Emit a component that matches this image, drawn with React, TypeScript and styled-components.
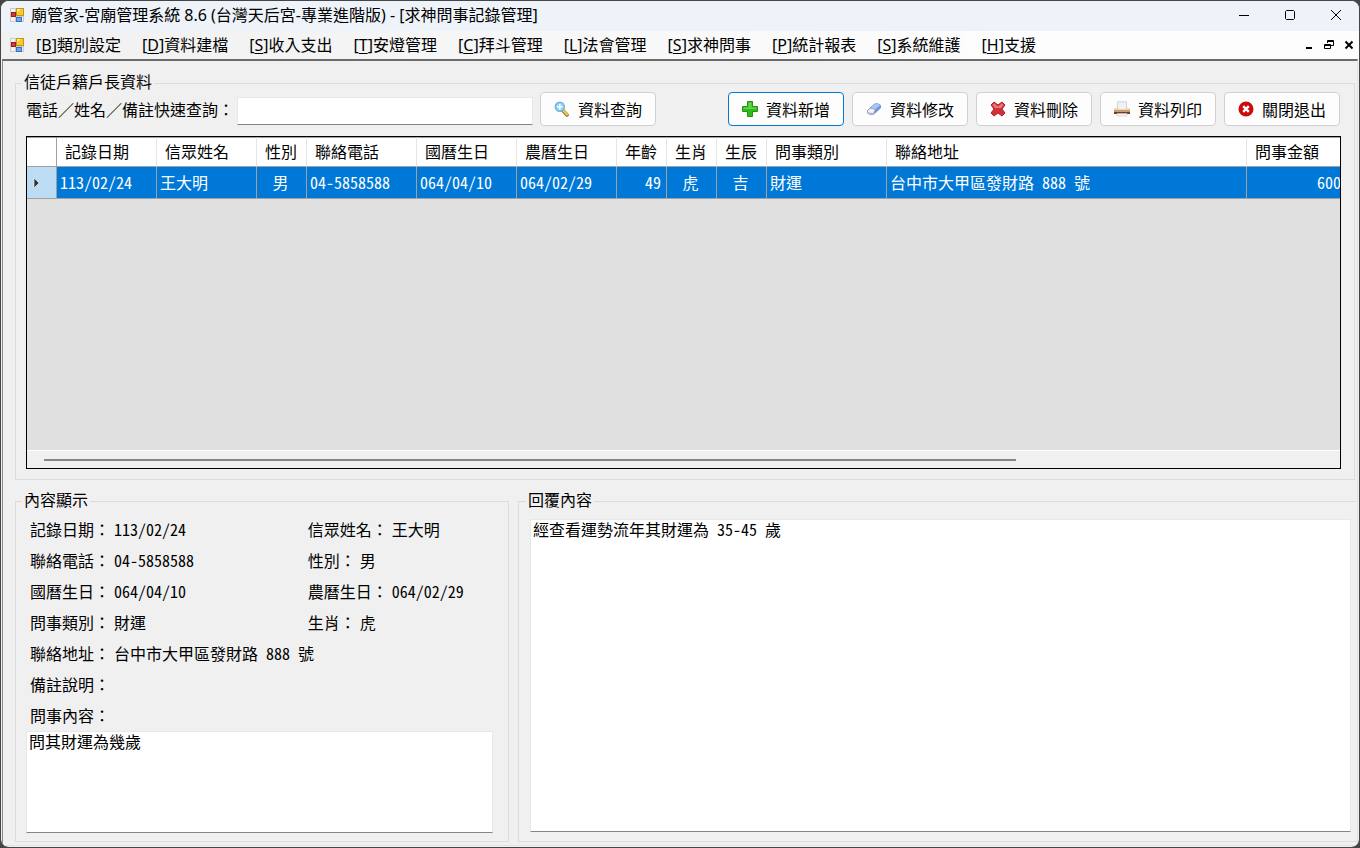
import React from "react";
import styled, { createGlobalStyle, css } from "styled-components";

const cjkMono = `"Noto Sans Mono CJK TC", "Noto Sans CJK TC", monospace`;
const uiFont = `"Noto Sans", "Noto Sans CJK TC", sans-serif`;

const GlobalStyle = createGlobalStyle`
  *, *::before, *::after { box-sizing: border-box; }
  body { margin: 0; background: #454547; color: #000; font: 16px/18px ${cjkMono}; }
  button, input, textarea { font: inherit; color: inherit; margin: 0; }
`;

const Window = styled.div`
  display: flex;
  flex-direction: column;
  min-height: 100vh;
  border: 1px solid #454547;
  border-radius: 9px;
  background: #f0f0f0;
  overflow: hidden;
`;

const TitleBar = styled.header`
  display: flex;
  align-items: center;
  height: 30px;
  padding: 0 0 2px 8px;
  background: #eef2f9;
  font-family: ${uiFont};
`;

const Title = styled.h1`
  flex: 1;
  margin: 0 0 0 6px;
  font-size: 16px;
  font-weight: 400;
  line-height: 28px;
  white-space: nowrap;
`;

const WindowButton = styled.button<{ $compact?: boolean }>`
  display: flex;
  align-items: center;
  justify-content: center;
  width: ${(p) => (p.$compact ? 20 : 46)}px;
  height: 28px;
  padding: 0;
  border: 0;
  background: none;
`;

const MenuBar = styled.nav`
  display: flex;
  align-items: center;
  height: 28px;
  padding-left: 8px;
  background: linear-gradient(90deg, #f0f0f0, #fdfdfd 75%);
  font-family: ${uiFont};
`;

const MenuItems = styled.div`
  display: flex;
  flex: 1;
  gap: 21px;
  margin-left: 11px;
`;

const MenuItem = styled.button`
  height: 28px;
  padding: 0;
  border: 0;
  background: none;
  line-height: 26px;
  white-space: nowrap;

  u {
    text-underline-offset: 2px;
    text-decoration-thickness: 1px;
  }
`;

const Workspace = styled.main`
  display: flex;
  flex: 1;
  flex-direction: column;
  gap: 12px;
  margin: 0 1px 1px;
  padding: 13px 0 3px 12px;
  border: 1px solid #e3e3e3;
  border-top: 2px solid #6b6b6b;
  border-left-color: #8a8a8a;
`;

const Group = styled.fieldset<{ $open?: boolean }>`
  display: flex;
  flex-direction: column;
  min-width: 0;
  margin: 0;
  border: 1px solid #dcdcdc;
  ${(p) => p.$open && css`border-right: 0;`}
`;

const Legend = styled.legend`
  height: 18px;
  margin-left: -4px;
  padding: 0 2px;
  line-height: 14px;
`;

const HouseholdGroup = styled(Group)`
  flex: 1 1 406px;
  margin-right: 2px;
  padding: 0 13px 10px 10px;
`;

const LowerArea = styled.div`
  display: flex;
  flex: 1 1 350px;
  gap: 9px;
`;

const DetailGroup = styled(Group)`
  flex: 1 1 494px;
  padding: 4px 15px 8px 10px;
`;

const ReplyGroup = styled(Group)`
  flex: 1 1 839px;
  padding: 9px 6px 9px 11px;
`;

const Toolbar = styled.div`
  display: flex;
  align-items: center;
  height: 34px;
  margin-bottom: 10px;
`;

const SearchLabel = styled.label`
  padding: 0 3px 0 0;
  white-space: nowrap;
`;

const fieldBox = css`
  border: 1px solid #e8e8e8;
  border-bottom-color: #868686;
  border-radius: 0;
  background: #fff;
  outline: 0;
`;

const SearchInput = styled.input`
  ${fieldBox}
  width: 296px;
  height: 28px;
  margin: 4px 7px 0 0;
  padding: 0 3px;
`;

const Actions = styled.div`
  display: flex;
  gap: 8px;
  margin: 0 1px 0 auto;
`;

const ToolButton = styled.button<{ $active?: boolean }>`
  display: flex;
  flex: none;
  align-items: center;
  gap: 8px;
  width: 116px;
  height: 34px;
  padding: 0 0 1px 13px;
  border: 1px solid ${(p) => (p.$active ? "#0078d4" : "#d0d0d0")};
  border-radius: 4px;
  background: #fdfdfd;
  white-space: nowrap;
`;

const GridFrame = styled.div`
  display: flex;
  flex: 1;
  flex-direction: column;
  border: 1px solid #000;
  background: #e0e0e0;
  overflow: hidden;
`;

const GridBody = styled.div`
  flex: 1;
  overflow: hidden;
`;

const DataTable = styled.table`
  width: 1320px;
  border-collapse: separate;
  border-spacing: 0;
  table-layout: fixed;
`;

const HeadCell = styled.th<{ $width: number; $strong?: boolean }>`
  width: ${(p) => p.$width}px;
  height: 30px;
  padding: 0 0 2px 8px;
  border: solid #a0a0a0;
  border-width: 1px 1px 1px 0;
  border-right-color: ${(p) => (p.$strong ? "#a0a0a0" : "#e5e5e5")};
  background: #fff;
  font-weight: 400;
  text-align: left;
  white-space: nowrap;
`;

const Cell = styled.td<{ $align: string }>`
  height: 32px;
  padding: 0 5px 2px 3px;
  border: solid #a0a0a0;
  border-width: 0 1px 1px 0;
  background: #0078d7;
  color: #fff;
  text-align: ${(p) => p.$align};
  white-space: nowrap;
`;

const RowMarker = styled.th`
  padding: 0 0 0 6px;
  border: solid #a0a0a0;
  border-width: 0 1px 1px 0;
  background: #bcdcf4;
  text-align: left;

  svg { display: block; }
`;

const ScrollTrack = styled.div`
  height: 18px;
  padding: 8px 0 0 17px;
  border-top: 1px solid #fff;
  background: #f0f0f0;
`;

const ScrollThumb = styled.div`
  width: 75%;
  height: 2px;
  background: #868686;
`;

const Details = styled.dl`
  display: grid;
  grid-template-columns: 3fr 2fr;
  margin: 0;
  padding-left: 4px;
`;

const Detail = styled.div<{ $wide?: boolean }>`
  display: flex;
  gap: 4px;
  grid-column: ${(p) => (p.$wide ? "1 / -1" : "auto")};
  line-height: 31px;
  white-space: nowrap;

  dd { margin: 0; }
`;

const QuestionLabel = styled.label`
  padding-left: 4px;
  line-height: 31px;
`;

const TextBox = styled.textarea`
  ${fieldBox}
  display: block;
  flex: 1;
  width: 100%;
  min-height: 60px;
  padding: 0 2px;
  resize: none;
`;

const AppIcon = () => (
  <svg width="16" height="16" viewBox="0 0 16 16">
    <rect x="1.500" y="1.500" width="13" height="13" fill="#f2f2f2" stroke="#cbcbcb" />
    <path d="M6.500 1.500v13M1.500 9.500h13" stroke="#cbcbcb" />
    <rect x="7.500" y="1.500" width="7" height="7" fill="#fbc926" stroke="#c4951c" />
    <path d="M8 5V2h4z" fill="#fff0a0" />
    <rect x="2.500" y="5.500" width="4" height="4" fill="#d23b2f" stroke="#9a1d17" />
    <rect x="7.500" y="10.500" width="5" height="4" fill="#6ea8f4" stroke="#3a70c4" />
  </svg>
);

const MagnifierIcon = () => (
  <svg width="16" height="16" viewBox="0 0 16 16">
    <path d="M9 9.500l4 4.500" stroke="#8d7a44" strokeWidth="3.600" strokeLinecap="round" />
    <path d="M9.500 9.500l3.500 4" stroke="#f5c945" strokeWidth="2.200" strokeLinecap="round" />
    <circle cx="5.800" cy="5.800" r="4.600" fill="#8fd2f8" stroke="#6aaede" strokeWidth="1.200" />
    <path d="M5.800 3v5.600M3 5.800h5.600" stroke="#fff" strokeWidth="1.600" />
  </svg>
);

const PlusIcon = () => (
  <svg width="16" height="16" viewBox="0 0 16 16">
    <path d="M5.500.500h5v5h5v5h-5v5h-5v-5h-5v-5h5z" fill="#30b91f" stroke="#1f9412" strokeLinejoin="round" />
    <path d="M6.500 1.500h3v5h5v1.500h-13V6.500h5z" fill="#62d64a" />
  </svg>
);

const EraserIcon = () => (
  <svg width="16" height="16" viewBox="0 0 16 16">
    <path d="M1.500 9.500L8 3.500q1-1 2.500-.800l2.500.500q1.500.400 1.500 2V7L8.500 12.500q-1 1-2.500.900L3 12.900q-1.500-.400-1.500-1.900z" fill="#7196dc" stroke="#6d7fa8" strokeWidth=".8" />
    <path d="M4.500 7L8 3.500q1-1 2.500-.800l2.500.500q1 .300 1.200 1L9 8.500z" fill="#a9c4f5" />
    <path d="M1.700 9.500l2.500-2.300 4.800 1-1 4.600q-1 .600-2 .500L3 12.800q-1.500-.400-1.400-1.800z" fill="#f4f5fa" stroke="#8a91a8" strokeWidth=".6" />
    <path d="M2 11l4.500 1L8.500 9.500l-.500 3.300q-1 .600-2 .500L3 12.800z" fill="#b9bfd0" />
  </svg>
);

const DeleteIcon = () => (
  <svg width="16" height="16" viewBox="0 0 16 16">
    <path d="M4 1l4 3L12 1l3 3-3 4 3 4-3 3-4-3L4 15l-3-3 3-4L1 4z" fill="#cf3338" stroke="#b3202a" strokeLinejoin="round" />
    <path d="M4 2.200l4 3.200 4-3.200L13.500 4 11 7H5L2.500 4z" fill="#e8787a" />
  </svg>
);

const PrinterIcon = () => (
  <svg width="16" height="16" viewBox="0 0 16 16">
    <path d="M3.500.800h9v8h-9z" fill="#f0f1f5" stroke="#c9cad1" strokeWidth=".8" />
    <path d="M1.500 7h2v1h9V7h2L16 9v4H0V9z" fill="#c99a6c" />
    <path d="M1.500 7h2v1h9V7h2L16 9H0z" fill="#ecd6b8" />
    <path d="M0 11h16v2H0z" fill="#6d4022" />
    <path d="M3 12.500h10V15H3z" fill="#f4f4f7" stroke="#c9cad1" strokeWidth=".6" />
  </svg>
);

const ExitIcon = () => (
  <svg width="16" height="16" viewBox="0 0 16 16">
    <circle cx="8" cy="8" r="7.500" fill="#cc0a0a" />
    <path d="M5.200 5.200l5.600 5.600M10.800 5.200l-5.600 5.600" stroke="#fff" strokeWidth="2.400" />
  </svg>
);

const Glyph = ({ d, bold }: { d: string; bold?: boolean }) => (
  <svg width="12" height="12" viewBox="0 0 12 12" fill="none" stroke="#000" strokeWidth={bold ? 2 : 1}>
    <path d={d} />
  </svg>
);

const RestoreIcon = () => (
  <svg width="12" height="12" viewBox="0 0 12 12" fill="none" stroke="#000">
    <path d="M4.500 4V1.500h6v5H8M4 2.500h7M1.500 5.500h6v4h-6zM1 6.500h7" />
  </svg>
);

const menus = [
  ["B", "類別設定"],
  ["D", "資料建檔"],
  ["S", "收入支出"],
  ["T", "安燈管理"],
  ["C", "拜斗管理"],
  ["L", "法會管理"],
  ["S", "求神問事"],
  ["P", "統計報表"],
  ["S", "系統維護"],
  ["H", "支援"],
];

const columns = [
  { title: "記錄日期", width: 100, value: "113/02/24", align: "left" },
  { title: "信眾姓名", width: 100, value: "王大明", align: "left" },
  { title: "性別", width: 50, value: "男", align: "center" },
  { title: "聯絡電話", width: 110, value: "04-5858588", align: "left" },
  { title: "國曆生日", width: 100, value: "064/04/10", align: "left" },
  { title: "農曆生日", width: 100, value: "064/02/29", align: "left" },
  { title: "年齡", width: 50, value: "49", align: "right" },
  { title: "生肖", width: 50, value: "虎", align: "center" },
  { title: "生辰", width: 50, value: "吉", align: "center" },
  { title: "問事類別", width: 120, value: "財運", align: "left" },
  { title: "聯絡地址", width: 360, value: "台中市大甲區發財路 888 號", align: "left" },
  { title: "問事金額", width: 100, value: "600", align: "right" },
];

const details = [
  { label: "記錄日期", value: "113/02/24" },
  { label: "信眾姓名", value: "王大明" },
  { label: "聯絡電話", value: "04-5858588" },
  { label: "性別", value: "男" },
  { label: "國曆生日", value: "064/04/10" },
  { label: "農曆生日", value: "064/02/29" },
  { label: "問事類別", value: "財運" },
  { label: "生肖", value: "虎" },
  { label: "聯絡地址", value: "台中市大甲區發財路 888 號", wide: true },
  { label: "備註說明", value: "", wide: true },
];

export default function App() {
  return (
    <Window lang="zh-TW">
      <GlobalStyle />
      <TitleBar>
        <AppIcon />
        <Title>廟管家-宮廟管理系統 8.6 (台灣天后宮-專業進階版) - [求神問事記錄管理]</Title>
        <WindowButton aria-label="最小化"><Glyph d="M1 6.500h10" /></WindowButton>
        <WindowButton aria-label="最大化"><Glyph d="M2.500 1.500h7l1 1v7l-1 1h-7l-1-1v-7z" /></WindowButton>
        <WindowButton aria-label="關閉"><Glyph d="M1 1l10 10M11 1L1 11" /></WindowButton>
      </TitleBar>

      <MenuBar>
        <AppIcon />
        <MenuItems>
          {menus.map(([key, name]) => (
            <MenuItem key={name}>[<u>{key}</u>]{name}</MenuItem>
          ))}
        </MenuItems>
        <WindowButton $compact aria-label="最小化子視窗"><Glyph bold d="M3 9h6" /></WindowButton>
        <WindowButton $compact aria-label="還原子視窗"><RestoreIcon /></WindowButton>
        <WindowButton $compact aria-label="關閉子視窗"><Glyph bold d="M2.500 2.500l7 7M9.500 2.500l-7 7" /></WindowButton>
      </MenuBar>

      <Workspace>
        <HouseholdGroup>
          <Legend>信徒戶籍戶長資料</Legend>
          <Toolbar>
            <SearchLabel htmlFor="quick-search">電話／姓名／備註快速查詢：</SearchLabel>
            <SearchInput id="quick-search" type="text" />
            <ToolButton><MagnifierIcon />資料查詢</ToolButton>
            <Actions>
              <ToolButton $active><PlusIcon />資料新增</ToolButton>
              <ToolButton><EraserIcon />資料修改</ToolButton>
              <ToolButton><DeleteIcon />資料刪除</ToolButton>
              <ToolButton><PrinterIcon />資料列印</ToolButton>
              <ToolButton><ExitIcon />關閉退出</ToolButton>
            </Actions>
          </Toolbar>
          <GridFrame>
            <GridBody>
              <DataTable>
                <thead>
                  <tr>
                    <HeadCell $width={30} $strong aria-label="選取" />
                    {columns.map((c) => (
                      <HeadCell key={c.title} $width={c.width} scope="col">{c.title}</HeadCell>
                    ))}
                  </tr>
                </thead>
                <tbody>
                  <tr>
                    <RowMarker scope="row" aria-label="目前記錄">
                      <svg width="8" height="12" viewBox="0 0 8 12"><path d="M1 1l5 5-5 5z" fill="#333" stroke="#fff" strokeWidth=".6" /></svg>
                    </RowMarker>
                    {columns.map((c) => (
                      <Cell key={c.title} $align={c.align}>{c.value}</Cell>
                    ))}
                  </tr>
                </tbody>
              </DataTable>
            </GridBody>
            <ScrollTrack><ScrollThumb /></ScrollTrack>
          </GridFrame>
        </HouseholdGroup>

        <LowerArea>
          <DetailGroup>
            <Legend>內容顯示</Legend>
            <Details>
              {details.map((d) => (
                <Detail key={d.label} $wide={d.wide}>
                  <dt>{d.label}：</dt>
                  <dd>{d.value}</dd>
                </Detail>
              ))}
            </Details>
            <QuestionLabel htmlFor="question">問事內容：</QuestionLabel>
            <TextBox id="question" defaultValue="問其財運為幾歲" />
          </DetailGroup>
          <ReplyGroup $open>
            <Legend>回覆內容</Legend>
            <TextBox aria-label="回覆內容" defaultValue="經查看運勢流年其財運為 35-45 歲" />
          </ReplyGroup>
        </LowerArea>
      </Workspace>
    </Window>
  );
}
